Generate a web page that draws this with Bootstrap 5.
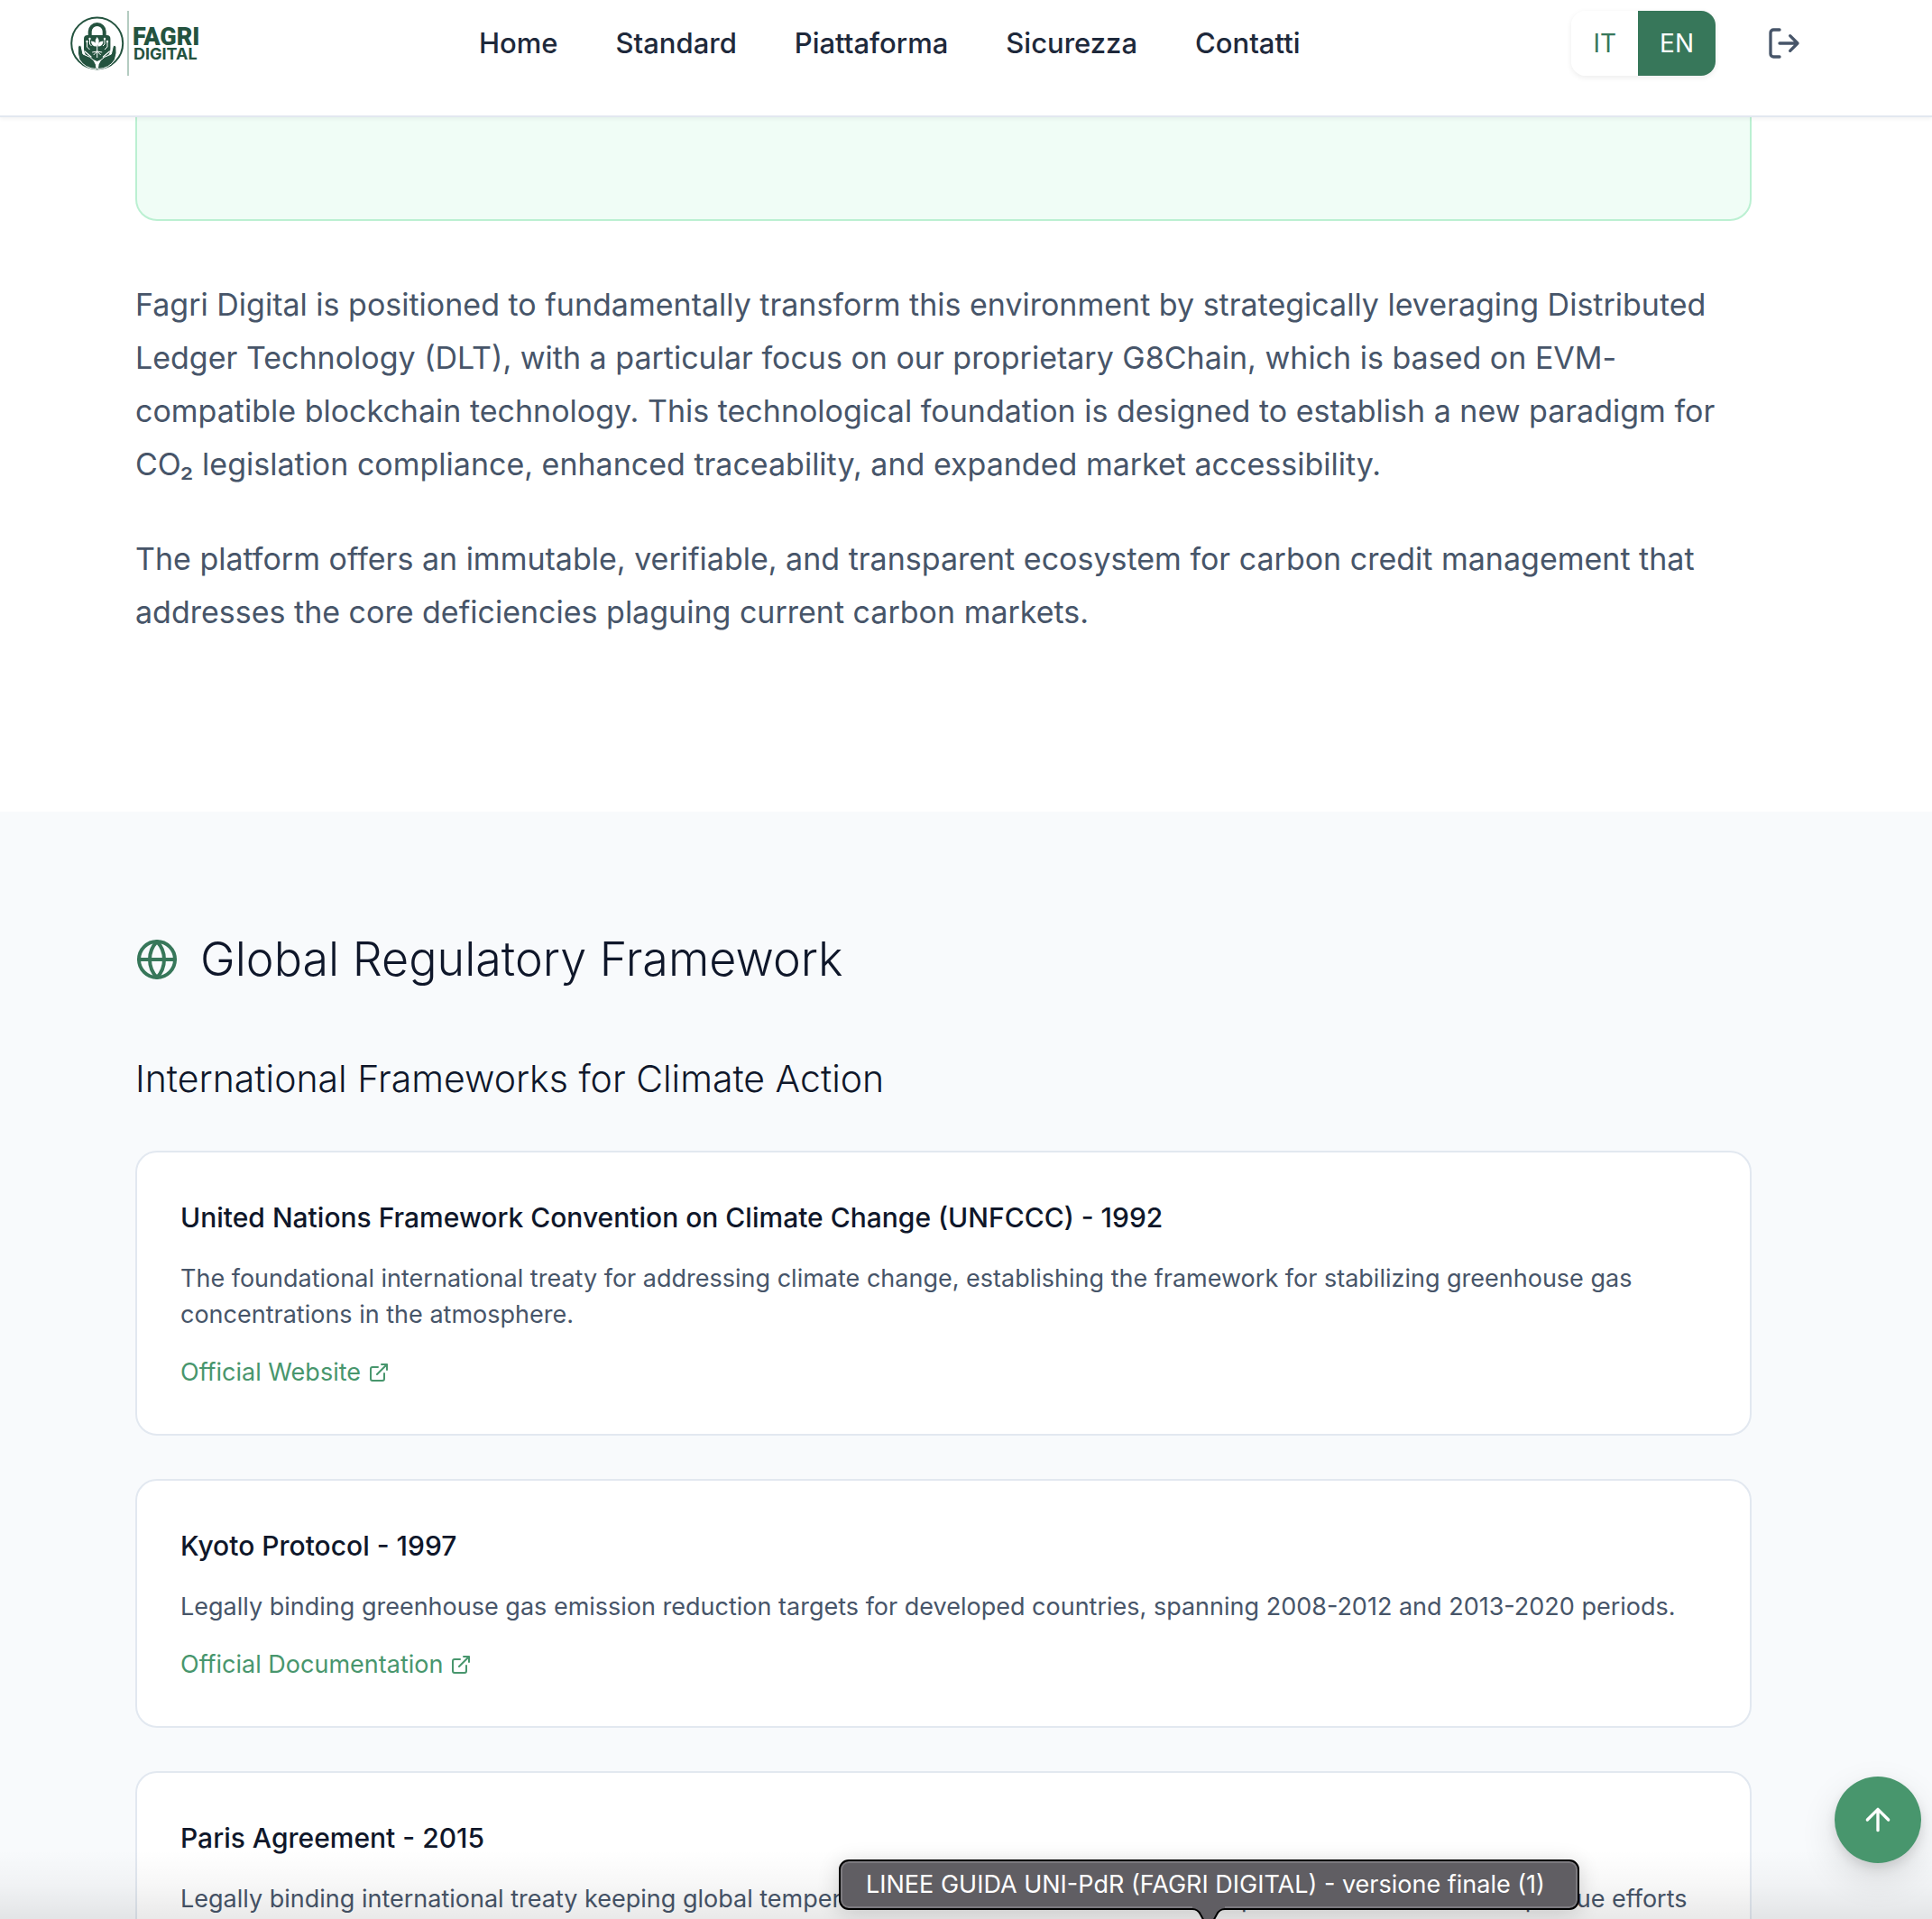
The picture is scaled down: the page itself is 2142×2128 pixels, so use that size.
<!DOCTYPE html>
<html lang="en">
<head>
<meta charset="utf-8">
<meta name="viewport" content="width=device-width, initial-scale=1">
<title>Fagri Digital</title>
<link href="https://cdn.jsdelivr.net/npm/bootstrap@5.3.0/dist/css/bootstrap.min.css" rel="stylesheet">
<style>
  body { font-family: Inter, "Liberation Sans", sans-serif; color: #0f172a; background: #fff; }
  .site-header { padding: 12px 144px 44px 78px; border-bottom: 2px solid #e2e8f0; box-shadow: 0 2px 4px rgba(0,0,0,.05); z-index: 5; }
  .brand { width: 152px; height: 72px; }
  .main-nav { gap: 64px; }
  .main-nav .nav-link { font-size: 31px; line-height: 48px; font-weight: 500; color: #1e293b; padding: 0; }
  .tools { gap: 56px; }
  .lang { border-radius: 16px; overflow: hidden; box-shadow: 0 2px 6px rgba(0,0,0,.08); }
  .lang .btn { font-size: 28px; line-height: 40px; padding: 16px 24px; border: 0; border-radius: 0; color: #37775a; background: #fff; }
  .lang .btn.active { color: #fff; background: #37775a; }
  .icon { fill: none; stroke: currentColor; stroke-width: 2; stroke-linecap: round; stroke-linejoin: round; flex: none; }
  .logout { color: #475569; line-height: 0; }
  .wrap { padding-left: 150px; padding-right: 200px; }
  .callout-end { height: 115px; background: #f0fdf6; border: 2px solid #bbf0d2; border-top: 0; border-radius: 0 0 24px 24px; margin-bottom: 63px; }
  .intro { padding-bottom: 192px; }
  .intro p { font-size: 34px; line-height: 59px; color: #475569; margin-bottom: 46px; }
  .intro p:last-child { margin-bottom: 0; }
  .framework { background: #f8fafc; padding-top: 128px; padding-bottom: 128px; }
  .framework h2, .framework h3 { font-weight: 300; }
  .framework h2 { font-size: 52px; line-height: 72px; margin-bottom: 64px; gap: 24px; }
  .framework h2 .icon { color: #37775a; }
  .framework h3 { font-size: 41px; line-height: 64px; margin-bottom: 48px; }
  .doc-list { gap: 48px; }
  .doc { border: 2px solid #e2e8f0; border-radius: 24px; background: #fff; }
  .doc .card-body { padding: 48px; gap: 24px; }
  .doc h4 { font-size: 30px; line-height: 48px; font-weight: 500; margin: 0; }
  .doc p { font-size: 27px; line-height: 40px; color: #475569; margin: 0; }
  .doc a { font-size: 27px; line-height: 40px; color: #48966d; gap: 8px; }
  .to-top { right: 12px; bottom: 62px; width: 96px; height: 96px; background: #48966d; color: #fff; border-radius: 50%; border: 0; box-shadow: 0 16px 40px rgba(0,0,0,.12), 0 6px 12px rgba(0,0,0,.1); }
  .dock-shade { height: 76px; background: linear-gradient(rgba(0,0,0,0), rgba(0,0,0,.03) 50%, rgba(0,0,0,.085)); pointer-events: none; }
  .dock-tip { left: 930px; bottom: 10px; height: 56px; padding: 2px 36px 0 28px; font-size: 27px; line-height: 48px; color: #fff; background: #605e63; border: 2px solid #000; border-radius: 11px; box-shadow: inset 0 0 0 2px #7c7a7f, 0 4px 24px rgba(0,0,0,.16); }
  .dock-tip svg { left: 50%; top: 50px; margin-left: -20px; }
</style>
</head>
<body class="vh-100 overflow-hidden position-relative">

<header class="site-header bg-white position-relative d-flex align-items-center justify-content-between">
  <a class="brand" href="#" aria-label="Fagri Digital">
    <svg width="152" height="72" viewBox="78 12 152 72">
      <circle cx="107.700" cy="48" r="28.500" fill="#fff" stroke="#24533f" stroke-width="2"/>
      <path d="M99.700 41v-6a8 8 0 0 1 16 0v6" fill="none" stroke="#24533f" stroke-width="4"/>
      <path d="M97 39h21.400q4 0 4 4v11q0 7-6 10l-8.700 4-8.700-4q-6-3-6-10V43q0-4 4-4z" fill="#24533f"/>
      <g fill="#24533f" stroke="#fff" stroke-width="1" stroke-linejoin="round">
        <path d="M86.500 52q1.500-3 3.500-1l2 9q9 3 12 7 3 4 3 9.500-13-.5-19-10.500-2.500-7-1.500-14z"/>
        <path d="M128.900 52q-1.500-3-3.500-1l-2 9q-9 3-12 7-3 4-3 9.500 13-.5 19-10.500 2.500-7 1.500-14z"/>
      </g>
      <path d="M94 57l7 6M121.400 57l-7 6" fill="none" stroke="#fff" stroke-width="1.200" stroke-linecap="round"/>
      <path d="M107.700 41q4 5 0 10q-4-5 0-10zM101 45.500q6 0 6 6q-6 0-6-6zM114.400 45.500q-6 0-6 6q6 0 6-6z" fill="#fff"/>
      <path d="M107.700 50v14M107.700 57l-5.500 1M107.700 57l5.500 1M107.700 57l-4 4M107.700 57l4 4M96.500 46v6l3 3M99.500 43v6l2 2M119 46v6l-3 3M116 43v6l-2 2" fill="none" stroke="#fff" stroke-width="1"/>
      <g fill="#fff"><circle cx="96.500" cy="46" r="1.200"/><circle cx="99.500" cy="43" r="1.200"/><circle cx="119" cy="46" r="1.200"/><circle cx="116" cy="43" r="1.200"/></g>
      <path d="M142 12v72" stroke="#b4ccc1" stroke-width="2"/>
      <text x="147" y="50" font-family="Roboto, sans-serif" font-weight="900" font-size="27" fill="#24533f">FAGRI</text>
      <text x="148" y="66" font-family="Inter, sans-serif" font-weight="700" font-size="18" fill="#24533f">DIGITAL</text>
    </svg>
  </a>
  <nav class="nav main-nav flex-nowrap" aria-label="Main">
    <a class="nav-link" href="#">Home</a>
    <a class="nav-link" href="#">Standard</a>
    <a class="nav-link" href="#">Piattaforma</a>
    <a class="nav-link" href="#">Sicurezza</a>
    <a class="nav-link" href="#">Contatti</a>
  </nav>
  <div class="tools d-flex align-items-center">
    <div class="lang d-flex" role="group" aria-label="Language">
      <button type="button" class="btn">IT</button>
      <button type="button" class="btn active">EN</button>
    </div>
    <button type="button" class="btn logout p-0 border-0" aria-label="Log out">
      <svg class="icon" width="40" height="40" viewBox="0 0 24 24"><path d="M9 21H5a2 2 0 0 1-2-2V5a2 2 0 0 1 2-2h4M16 17l5-5-5-5M21 12H9"/></svg>
    </button>
  </div>
</header>

<main>
  <section class="wrap intro">
    <div class="callout-end"></div>
    <p>Fagri Digital is positioned to fundamentally transform this environment by strategically leveraging Distributed Ledger Technology (DLT), with a particular focus on our proprietary G8Chain, which is based on EVM-compatible blockchain technology. This technological foundation is designed to establish a new paradigm for CO₂ legislation compliance, enhanced traceability, and expanded market accessibility.</p>
    <p>The platform offers an immutable, verifiable, and transparent ecosystem for carbon credit management that addresses the core deficiencies plaguing current carbon markets.</p>
  </section>

  <section class="wrap framework">
    <h2 class="d-flex align-items-center">
      <svg class="icon" width="48" height="48" viewBox="0 0 24 24"><circle cx="12" cy="12" r="10"/><path d="M12 2a14.500 14.500 0 0 0 0 20 14.500 14.500 0 0 0 0-20M2 12h20"/></svg>
      Global Regulatory Framework
    </h2>
    <h3>International Frameworks for Climate Action</h3>
    <div class="doc-list d-flex flex-column">
      <article class="card doc">
        <div class="card-body d-flex flex-column align-items-start">
          <h4>United Nations Framework Convention on Climate Change (UNFCCC) - 1992</h4>
          <p>The foundational international treaty for addressing climate change, establishing the framework for stabilizing greenhouse gas concentrations in the atmosphere.</p>
          <a href="#" class="d-flex align-items-center text-decoration-none">Official Website
            <svg class="icon" width="24" height="24" viewBox="0 0 24 24"><path d="M15 3h6v6M10 14 21 3M18 13v6a2 2 0 0 1-2 2H5a2 2 0 0 1-2-2V8a2 2 0 0 1 2-2h6"/></svg></a>
        </div>
      </article>
      <article class="card doc">
        <div class="card-body d-flex flex-column align-items-start">
          <h4>Kyoto Protocol - 1997</h4>
          <p>Legally binding greenhouse gas emission reduction targets for developed countries, spanning 2008-2012 and 2013-2020 periods.</p>
          <a href="#" class="d-flex align-items-center text-decoration-none">Official Documentation
            <svg class="icon" width="24" height="24" viewBox="0 0 24 24"><path d="M15 3h6v6M10 14 21 3M18 13v6a2 2 0 0 1-2 2H5a2 2 0 0 1-2-2V8a2 2 0 0 1 2-2h6"/></svg></a>
        </div>
      </article>
      <article class="card doc">
        <div class="card-body d-flex flex-column align-items-start">
          <h4>Paris Agreement - 2015</h4>
          <p>Legally binding international treaty keeping global temperature rise to well below 2°C above pre-industrial levels and pursue efforts</p>
        </div>
      </article>
    </div>
  </section>
</main>

<div class="dock-shade position-absolute bottom-0 start-0 end-0"></div>
<button type="button" class="btn to-top position-absolute d-flex align-items-center justify-content-center p-0" aria-label="Back to top">
  <svg class="icon" width="40" height="40" viewBox="0 0 24 24"><path d="M5 12l7-7 7 7M12 19V5"/></svg>
</button>
<div class="dock-tip position-absolute text-nowrap" role="tooltip">LINEE GUIDA UNI-PdR (FAGRI DIGITAL) - versione finale (1)
  <svg class="position-absolute" width="40" height="20" viewBox="0 0 40 20"><path d="M2 0V3q6 0 9 6l6 11h6l6-11q3-6 9-6V0z" fill="#605e63"/><path d="M2 3q6 0 9 6l6 11M38 3q-6 0-9 6l-6 11" fill="none" stroke="#000" stroke-width="2"/></svg>
</div>

<script src="https://cdn.jsdelivr.net/npm/bootstrap@5.3.0/dist/js/bootstrap.bundle.min.js"></script>
</body>
</html>
